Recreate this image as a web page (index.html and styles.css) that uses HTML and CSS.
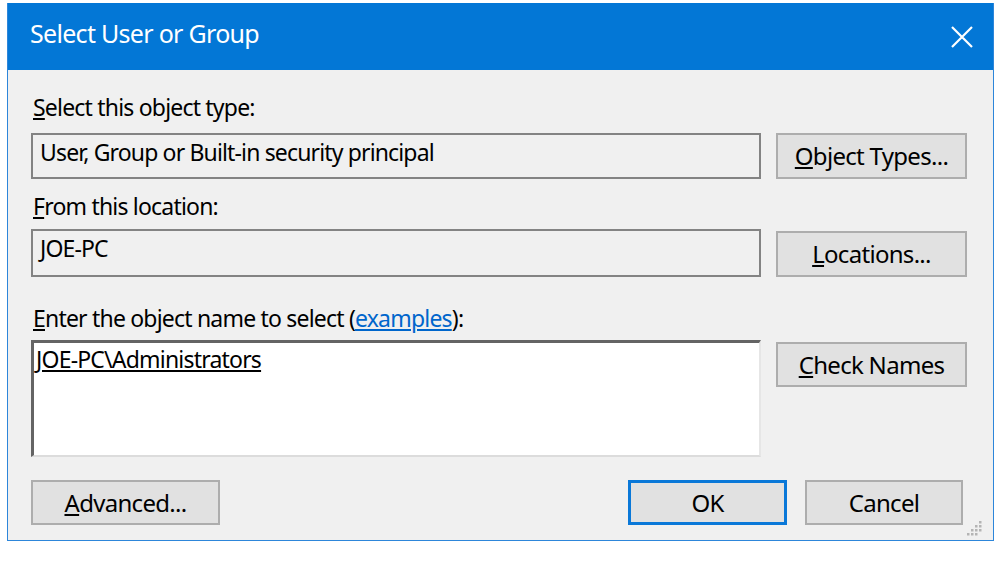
FILE: index.html
```html
<!DOCTYPE html>
<html>
<head>
<meta charset="utf-8">
<link rel="stylesheet" href="styles.css">
</head>
<body>
<div class="dialog">
  <div class="titlebar">
    <span class="title">Select User or Group</span>
    <span class="close">
      <svg width="22" height="22" viewBox="0 0 22 22"><path d="M1 1 L21 21 M21 1 L1 21" stroke="#fff" stroke-width="2.2" fill="none"/></svg>
    </span>
  </div>
  <div class="content">
    <div class="form">
      <div class="label label-first"><u>S</u>elect this object type:</div>
      <div class="field field-first">User, Group or Built-in security principal</div>
      <button class="btn side-btn"><u>O</u>bject Types...</button>

      <div class="label label-second"><u>F</u>rom this location:</div>
      <div class="field field-second">JOE-PC</div>
      <button class="btn side-btn"><u>L</u>ocations...</button>

      <div class="label label-third"><u>E</u>nter the object name to select (<a class="link" href="#">examples</a>):</div>
      <div class="names"><u>JOE-PC\Administrators</u></div>
      <button class="btn side-btn check-btn"><u>C</u>heck Names</button>
    </div>
    <div class="footer">
      <button class="btn"><u>A</u>dvanced...</button>
      <button class="btn small-btn ok-btn">OK</button>
      <button class="btn small-btn cancel-btn">Cancel</button>
    </div>
  </div>
  <svg class="grip" width="18" height="16" viewBox="0 0 18 16">
    <g fill="#b4b4b4">
      <rect x="14" y="1" width="2.5" height="2.5"/>
      <rect x="10" y="5" width="2.5" height="2.5"/><rect x="14" y="5" width="2.5" height="2.5"/>
      <rect x="6" y="9" width="2.5" height="2.5"/><rect x="10" y="9" width="2.5" height="2.5"/><rect x="14" y="9" width="2.5" height="2.5"/>
      <rect x="2" y="13" width="2.5" height="2.5"/><rect x="6" y="13" width="2.5" height="2.5"/><rect x="10" y="13" width="2.5" height="2.5"/>
    </g>
  </svg>
</div>
</body>
</html>
```
FILE: styles.css
```css
* { box-sizing: border-box; }

body {
  margin: 0;
  background: #ffffff;
  font-family: "Noto Sans", "Open Sans", sans-serif;
  color: #000;
}

.dialog {
  position: relative;
  margin: 3px 0 0 7px;
  width: 987px;
  height: 538px;
  background: #f0f0f0;
  border: 1px solid #2d86da;
  border-top: none;
}

.titlebar {
  height: 67px;
  background: #0377d6;
  display: flex;
  align-items: center;
  padding-left: 22px;
}

.title {
  color: #fff;
  font-size: 25px;
  line-height: 32px;
  letter-spacing: -0.7px;
  margin-bottom: 8px;
}

.close {
  margin-left: auto;
  margin-right: 20px;
  display: flex;
}

.content {
  padding: 23px 26px 15px 23px;
}

.form {
  display: grid;
  grid-template-columns: 730px 191px;
  column-gap: 15px;
}

.label {
  grid-column: 1 / -1;
  height: 28px;
  line-height: 28px;
  font-size: 23px;
  letter-spacing: -0.8px;
  padding-left: 2px;
  white-space: nowrap;
}

.label-second { margin-top: 13px; }
.label-third { margin-top: 27px; }

.link {
  color: #0066cc;
  text-decoration: underline;
}

.field {
  border: 2px solid #838383;
  background: #f0f0f0;
  font-size: 23px;
  letter-spacing: -0.85px;
  line-height: 28px;
  padding: 3px 7px 0;
  white-space: nowrap;
}

.field-first { margin-top: 12px; height: 46px; }
.field-second { margin-top: 9px; height: 48px; }

.names {
  margin-top: 8px;
  height: 117px;
  background: #fff;
  border-style: solid;
  border-width: 3px 2px 2px 3px;
  border-color: #646464 #e6e6e6 #dcdcdc #646464;
  font-size: 23px;
  letter-spacing: -0.8px;
  line-height: 28px;
  padding: 2px 2px;
}

.btn {
  font-family: "Noto Sans", "Open Sans", sans-serif;
  font-size: 24px;
  letter-spacing: -0.7px;
  color: #000;
  background: #e1e1e1;
  border: 2px solid #adadad;
  height: 45px;
  width: 189px;
  padding: 0;
  line-height: 28px;
}

.side-btn {
  width: 191px;
  height: 46px;
  align-self: end;
}

.check-btn {
  align-self: start;
  margin-top: 10px;
  height: 45px;
}

.footer {
  display: flex;
  align-items: center;
  gap: 18px;
  margin-top: 23px;
  padding-right: 4px;
}

.small-btn {
  width: 158px;
}

.ok-btn {
  margin-left: auto;
  border: 3px solid #0a78d8;
  width: 159px;
}

.grip {
  position: absolute;
  right: 10px;
  bottom: 4px;
}
```
